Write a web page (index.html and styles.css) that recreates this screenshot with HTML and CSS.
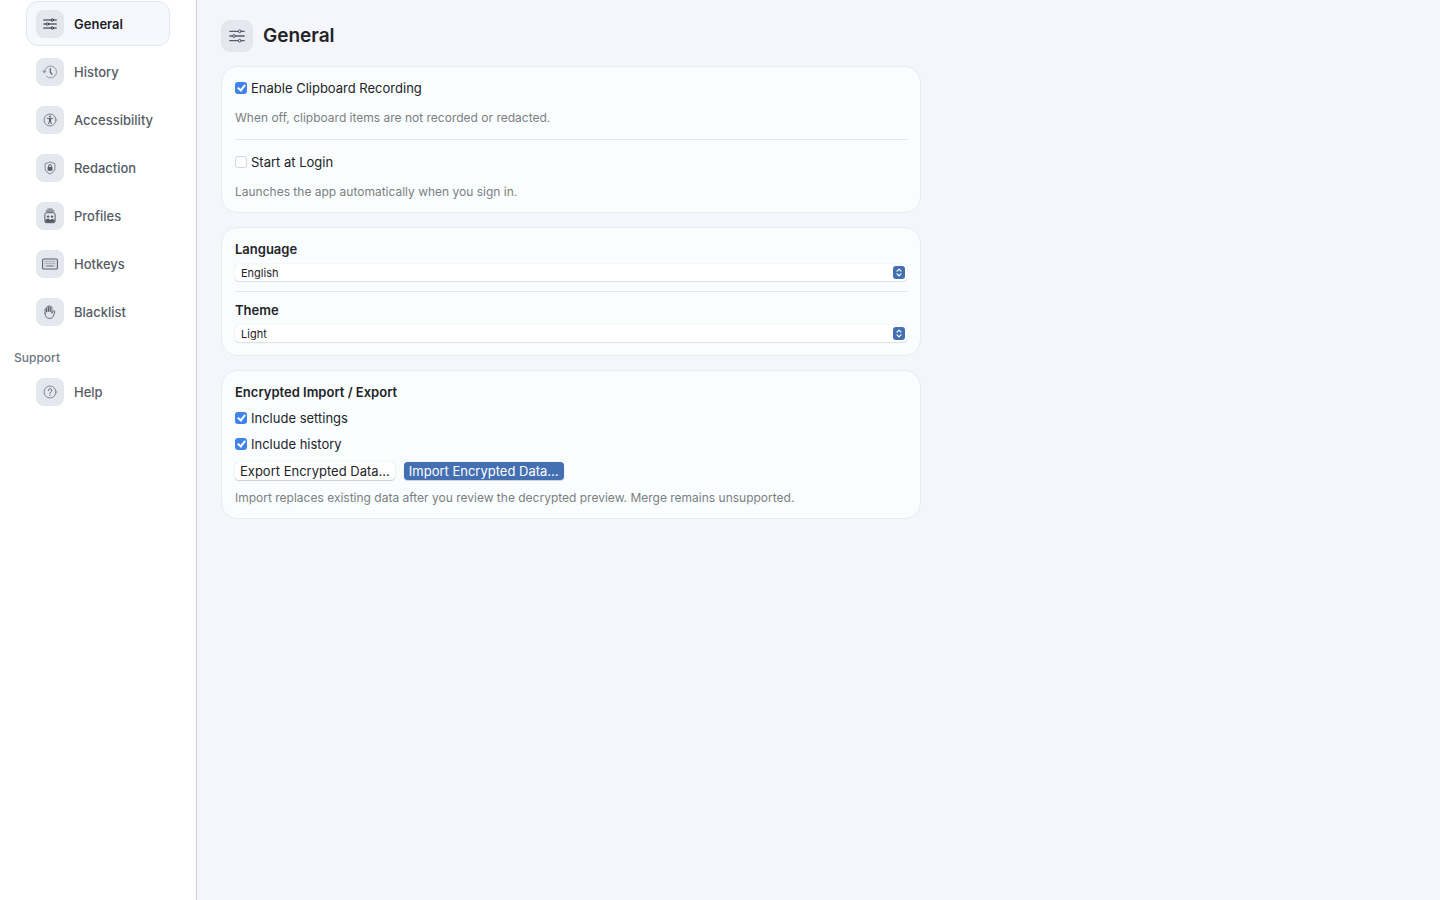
FILE: index.html
```
<!DOCTYPE html>
<html lang="en">
<head>
    <meta charset="UTF-8">
    <meta name="viewport" content="width=device-width, initial-scale=1.0">
    <title>Settings - General</title>
    <link rel="stylesheet" href="styles.css">
</head>
<body>

    <nav class="sidebar">
        <a class="nav-item active" href="#general">
            <span class="nav-icon dark">
                <svg width="14" height="12" viewBox="0 0 14 12" fill="none" stroke="currentColor" stroke-width="1.2" stroke-linecap="round">
                    <path d="M.7 2h7.2M10.7 2h2.6M.7 6h2.4M5.9 6h7.4M.7 10h7.2M10.7 10h2.6"/>
                    <circle cx="9.3" cy="2" r="1.2" stroke-width=".9"/><circle cx="4.5" cy="6" r="1.2" stroke-width=".9"/><circle cx="9.3" cy="10" r="1.2" stroke-width=".9"/>
                </svg>
            </span>
            General
        </a>
        <a class="nav-item" href="#history">
            <span class="nav-icon soft">
                <svg width="16" height="14" viewBox="0 0 16 14" fill="none" stroke="currentColor" stroke-width=".9" stroke-linecap="round" stroke-linejoin="round">
                    <path d="M2.5 7A6 6 0 1 1 4.6 11.6"/>
                    <path d="M1 5.9h3L2.5 8z" fill="currentColor" stroke-width=".5"/>
                    <path d="M8.3 3.7V7.2l1.8 2.2" stroke="#535b66" stroke-width="1.2"/>
                </svg>
            </span>
            History
        </a>
        <a class="nav-item" href="#accessibility">
            <span class="nav-icon">
                <svg width="14" height="14" viewBox="0 0 14 14" fill="none" stroke="currentColor" stroke-linecap="round" stroke-linejoin="round">
                    <circle cx="7" cy="7" r="6" stroke-width=".7"/>
                    <circle cx="7" cy="3.6" r="1" fill="currentColor" stroke="none"/>
                    <path d="M4.2 5.3l2 .4h1.600l2-.4" stroke-width=".9"/>
                    <path d="M6.500 5.800h1v2.200l.8 2.700M6.500 5.800v2.200l-.8 2.700M7 5.800v2.200" stroke-width="1"/>
                </svg>
            </span>
            Accessibility
        </a>
        <a class="nav-item" href="#redaction">
            <span class="nav-icon">
                <svg width="12" height="14" viewBox="0 0 12 14" fill="none" stroke="currentColor">
                    <path d="M6 .8c1.500 1 3 1.400 4.200 1.500.5.1.7.4.7.8v4.200c0 2.600-2 4.300-4.900 5.700C3.100 11.600 1.100 9.900 1.100 7.300V3.100c0-.4.2-.7.7-.8C3 2.200 4.500 1.800 6 .8z" stroke-width=".7"/>
                    <rect x="3.600" y="6" width="4.800" height="3.800" rx=".6" fill="currentColor" stroke="none"/>
                    <path d="M4.600 6.200V5a1.400 1.400 0 0 1 2.800 0v1.200" stroke-width=".9"/>
                </svg>
            </span>
            Redaction
        </a>
        <a class="nav-item" href="#profiles">
            <span class="nav-icon">
                <svg width="12" height="16" viewBox="0 0 12 16" fill="none" stroke="currentColor">
                    <path d="M3.800 1.100h4.400" stroke-width="1.300" stroke-linecap="round" opacity=".75"/>
                    <path d="M2.300 3.100h7.400" stroke-width="1.500" stroke-linecap="round" opacity=".75"/>
                    <rect x=".9" y="4.700" width="10.200" height="10" rx="1.800" stroke-width="1"/>
                    <circle cx="4.100" cy="8.600" r="1.200" fill="currentColor" stroke="none"/>
                    <circle cx="8" cy="8.600" r="1.200" fill="currentColor" stroke="none"/>
                    <path d="M1.300 12.400c1-2 4-2 4.800-.4.9-1.600 3.700-1.500 4.600.4v1c0 .7-.5 1-1.200 1h-7c-.7 0-1.200-.3-1.200-1z" fill="currentColor" stroke="none"/>
                </svg>
            </span>
            Profiles
        </a>
        <a class="nav-item" href="#hotkeys">
            <span class="nav-icon">
                <svg width="16" height="12" viewBox="0 0 16 12" fill="none" stroke="currentColor">
                    <rect x=".6" y="1" width="14.800" height="10" rx="1.300" stroke-width="1.100"/>
                    <path d="M2.500 3.500h11M2.500 5.700h11" stroke-width="1.300" stroke-dasharray="1 .4" opacity=".5"/>
                    <path d="M2.500 8h1.200M12.300 8h1.200" stroke-width="1.200" opacity=".5"/>
                    <path d="M4.300 8h7.400" stroke-width="1.200" opacity=".8"/>
                </svg>
            </span>
            Hotkeys
        </a>
        <a class="nav-item" href="#blacklist">
            <span class="nav-icon">
                <svg width="12" height="14" viewBox="0 0 12 14" fill="none" stroke="currentColor" stroke-width=".9" stroke-linecap="round" stroke-linejoin="round">
                    <path d="M1.100 8.600V4.200c0-1 1.600-1 1.600 0V7M2.700 6.500V2.300c0-1.100 1.700-1.100 1.700 0v4.200M4.400 6.200V1.500c0-1.100 1.800-1.100 1.800 0v4.700M6.200 6.500V2.400c0-1.100 1.700-1.100 1.700 0v6l1.300-2.200c.5-.9 1.900-.4 1.600.6l-1.100 3.500C9 12.400 7.700 13.400 5.600 13.400c-2.800 0-4.500-1.800-4.500-4.800"/>
                </svg>
            </span>
            Blacklist
        </a>

        <h2 class="nav-heading">Support</h2>

        <a class="nav-item" href="#help">
            <span class="nav-icon">
                <svg width="14" height="14" viewBox="0 0 14 14" fill="none" stroke="currentColor" stroke-linecap="round">
                    <circle cx="7" cy="7" r="6" stroke-width=".7"/>
                    <path d="M5.300 5.500c0-2.300 3.500-2.200 3.500-.1C8.800 6.700 7 6.700 7 8.200" stroke-width="1"/>
                    <circle cx="7" cy="10.100" r=".7" fill="currentColor" stroke="none"/>
                </svg>
            </span>
            Help
        </a>
    </nav>

    <main class="content">
        <header class="page-header">
            <span class="page-icon">
                <svg width="16" height="14" viewBox="0 0 16 14" fill="none" stroke="currentColor" stroke-width="1.300" stroke-linecap="round">
                    <path d="M.8 2.300h8.400M12.200 2.300h3M.8 7h2.700M6.500 7h8.700M.8 11.700h8.400M12.200 11.700h3"/>
                    <circle cx="10.700" cy="2.300" r="1.400" stroke-width="1"/><circle cx="5" cy="7" r="1.400" stroke-width="1"/><circle cx="10.700" cy="11.700" r="1.400" stroke-width="1"/>
                </svg>
            </span>
            <h1>General</h1>
        </header>

        <section class="card roomy">
            <label class="check"><input type="checkbox" checked>Enable Clipboard Recording</label>
            <p class="hint">When off, clipboard items are not recorded or redacted.</p>
            <hr>
            <label class="check"><input type="checkbox">Start at Login</label>
            <p class="hint">Launches the app automatically when you sign in.</p>
        </section>

        <section class="card">
            <div class="field">
                <label for="language">Language</label>
                <div class="select-wrap">
                    <select id="language">
                        <option>English</option>
                    </select>
                    <svg class="stepper" viewBox="0 0 12 12" fill="none" stroke="currentColor" stroke-width="1.200" stroke-linecap="round" stroke-linejoin="round">
                        <path d="M4 4.600l2-2 2 2M4 7.400l2 2 2-2"/>
                    </svg>
                </div>
            </div>
            <hr>
            <div class="field">
                <label for="theme">Theme</label>
                <div class="select-wrap">
                    <select id="theme">
                        <option>Light</option>
                    </select>
                    <svg class="stepper" viewBox="0 0 12 12" fill="none" stroke="currentColor" stroke-width="1.200" stroke-linecap="round" stroke-linejoin="round">
                        <path d="M4 4.600l2-2 2 2M4 7.400l2 2 2-2"/>
                    </svg>
                </div>
            </div>
        </section>

        <section class="card">
            <h2>Encrypted Import / Export</h2>
            <label class="check"><input type="checkbox" checked>Include settings</label>
            <label class="check"><input type="checkbox" checked>Include history</label>
            <div class="actions">
                <button type="button">Export Encrypted Data…</button>
                <button type="button" class="primary">Import Encrypted Data…</button>
            </div>
            <p class="hint">Import replaces existing data after you review the decrypted preview. Merge remains unsupported.</p>
        </section>
    </main>

</body>
</html>
```
FILE: styles.css
```
* {
    box-sizing: border-box;
}

body {
    margin: 0;
    min-height: 100vh;
    display: flex;
    font-family: Inter, "Liberation Sans", sans-serif;
    font-size: 13px;
    line-height: 16px;
    color: #222427;
    background: #f5f6fb;
}

h1, h2, p {
    margin: 0;
}

/* Sidebar */
.sidebar {
    width: 197px;
    flex-shrink: 0;
    padding: 1px 26px;
    display: flex;
    flex-direction: column;
    gap: 3px;
    background: #fff;
    border-right: 1px solid #cfd0d3;
}

.nav-item {
    display: flex;
    align-items: center;
    gap: 10px;
    height: 45px;
    padding: 0 9px;
    border: 1px solid transparent;
    border-radius: 12px;
    color: #565c64;
    font-weight: 500;
    text-decoration: none;
}

.nav-item.active {
    color: #1b1e25;
    font-weight: 600;
    background: #f7f8fd;
    border-color: #e3e6ef;
}

.nav-icon {
    display: flex;
    align-items: center;
    justify-content: center;
    width: 28px;
    height: 28px;
    border-radius: 8px;
    background: #e4e7ee;
    color: #565c64;
}

.nav-icon.dark {
    color: #23262e;
}

.nav-icon.soft {
    color: #8b919b;
}

.nav-heading {
    margin: 13px -12px 0;
    font-size: 12px;
    font-weight: 500;
    color: #6e757e;
}

/* Main column */
.content {
    flex: 1;
    min-width: 0;
    padding: 20px 24px;
    display: flex;
    flex-direction: column;
    gap: 14px;
}

.page-header {
    display: flex;
    align-items: center;
    gap: 10px;
}

.page-header h1 {
    font-size: 19px;
    line-height: 24px;
    font-weight: 600;
}

.page-icon {
    display: flex;
    align-items: center;
    justify-content: center;
    width: 32px;
    height: 32px;
    border-radius: 9px;
    background: #e4e7ee;
    color: #565c64;
}

/* Cards */
.card {
    display: flex;
    flex-direction: column;
    gap: 10px;
    max-width: 700px;
    padding: 13px;
    border: 1px solid #e9ebef;
    border-radius: 16px;
    background: #f9fdfe;
}

.card.roomy {
    gap: 14px;
}

.card h2,
.field label {
    font-size: 13px;
    font-weight: 600;
}

.card hr {
    width: 100%;
    height: 1px;
    margin: 0;
    border: none;
    background: #e4e8ea;
}

.check {
    display: flex;
    align-items: center;
    align-self: flex-start;
    gap: 4px;
}

.check input {
    appearance: none;
    display: flex;
    justify-content: center;
    width: 12px;
    height: 12px;
    margin: 0;
    border: 1px solid #d5d8da;
    border-radius: 3px;
    background: #fff;
}

.check input:checked {
    border: none;
    padding-top: 1px;
    background: #3f83ea;
}

/* tick mark */
.check input:checked::before {
    content: "";
    width: 3px;
    height: 6px;
    border: solid #fff;
    border-width: 0 2px 2px 0;
    transform: rotate(38deg);
}

.hint {
    font-size: 12px;
    line-height: 15px;
    color: #7b7f82;
}

.field {
    display: flex;
    flex-direction: column;
    gap: 7px;
}

.select-wrap {
    position: relative;
    display: flex;
}

select {
    appearance: none;
    width: 100%;
    height: 17px;
    padding: 0 20px 0 6px;
    border: none;
    border-radius: 4px;
    background: #fff;
    box-shadow: 0 0 1px rgba(0, 0, 0, 0.2), 0 1px 1px rgba(0, 0, 0, 0.1);
    color: #222427;
    font-family: inherit;
    font-size: 11px;
}

.stepper {
    position: absolute;
    top: 2px;
    right: 2px;
    width: 12px;
    height: 13px;
    border-radius: 3px;
    background: #4470b3;
    color: #fff;
    pointer-events: none;
}

.actions {
    display: flex;
    gap: 9px;
}

button {
    height: 18px;
    padding: 0 5px;
    border: none;
    border-radius: 4px;
    background: #fff;
    box-shadow: 0 0 1px rgba(0, 0, 0, 0.25), 0 1px 1px rgba(0, 0, 0, 0.15);
    color: #222427;
    font-family: inherit;
    font-size: 13px;
    line-height: 18px;
}

button.primary {
    background: #4470b3;
    color: #fff;
}
```
